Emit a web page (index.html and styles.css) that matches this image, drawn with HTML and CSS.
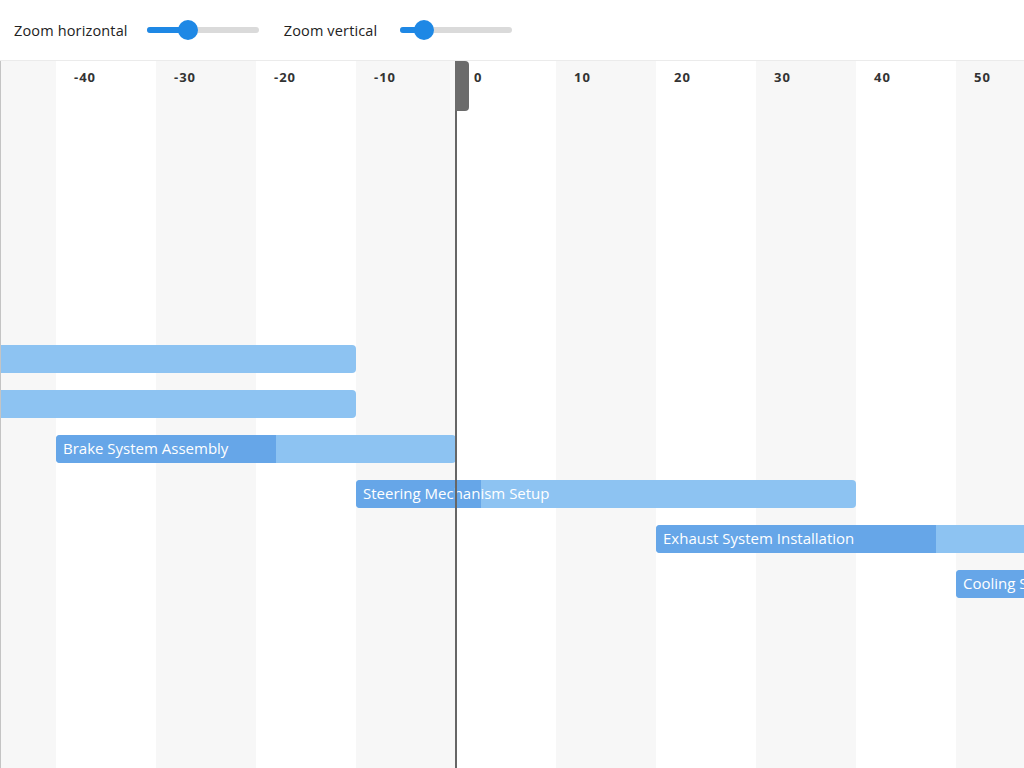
FILE: index.html
```html
<!DOCTYPE html>
<html>
<head>
<meta charset="utf-8">
<link rel="stylesheet" href="styles.css">
</head>
<body>
<div class="app">
  <header class="toolbar">
    <span class="label">Zoom horizontal</span>
    <div class="slider s1"><div class="fill" style="width:41px"></div><div class="thumb"></div></div>
    <span class="label">Zoom vertical</span>
    <div class="slider s2"><div class="fill" style="width:24px"></div><div class="thumb"></div></div>
  </header>
  <main class="canvas">
    <div class="stripes">
      <div class="col alt partial"></div>
      <div class="col"><span class="tick">-40</span></div>
      <div class="col alt"><span class="tick">-30</span></div>
      <div class="col"><span class="tick">-20</span></div>
      <div class="col alt"><span class="tick">-10</span></div>
      <div class="col"><span class="tick">0</span></div>
      <div class="col alt"><span class="tick">10</span></div>
      <div class="col"><span class="tick">20</span></div>
      <div class="col alt"><span class="tick">30</span></div>
      <div class="col"><span class="tick">40</span></div>
      <div class="col alt"><span class="tick">50</span></div>
    </div>
    <div class="rows">
      <div class="row"></div>
      <div class="row"></div>
      <div class="row"></div>
      <div class="row"></div>
      <div class="row"></div>
      <div class="row"></div>
      <div class="row"><div class="bar" style="margin-left:-145px;width:500px"><div class="progress" style="width:20%"></div></div></div>
      <div class="row"><div class="bar" style="margin-left:-145px;width:500px"><div class="progress" style="width:15%"></div></div></div>
      <div class="row"><div class="bar" style="margin-left:55px;width:400px"><div class="progress" style="width:55%"></div><span class="name">Brake System Assembly</span></div></div>
      <div class="row"><div class="bar" style="margin-left:355px;width:500px"><div class="progress" style="width:25%"></div><span class="name">Steering Mechanism Setup</span></div></div>
      <div class="row"><div class="bar" style="margin-left:655px;width:500px"><div class="progress" style="width:56%"></div><span class="name">Exhaust System Installation</span></div></div>
      <div class="row"><div class="bar" style="margin-left:955px;width:400px"><div class="progress" style="width:60%"></div><span class="name">Cooling System Integration</span></div></div>
    </div>
    <div class="today"><div class="handle"></div></div>
  </main>
</div>
</body>
</html>
```
FILE: styles.css
```css
* { box-sizing: border-box; }
html, body { margin: 0; padding: 0; }
body {
  font-family: "Open Sans", "Noto Sans", sans-serif;
  color: #222;
  background: #fff;
}
.app {
  height: 100vh;
  display: flex;
  flex-direction: column;
  overflow: hidden;
}
.toolbar {
  flex: 0 0 61px;
  display: flex;
  align-items: center;
  padding-left: 14px;
  border-bottom: 1px solid #ebebeb;
}
.label {
  font-size: 14.5px;
  letter-spacing: 0.15px;
  color: #222;
}
.slider {
  position: relative;
  width: 112px;
  height: 6px;
  border-radius: 3px;
  background: #dadada;
  margin-left: 19px;
  margin-right: 25px;
}
.s2 { margin-left: 23px; }
.slider .fill {
  height: 6px;
  border-radius: 3px;
  background: #1e88e5;
}
.slider .thumb {
  position: absolute;
  top: -7px;
  width: 20px;
  height: 20px;
  border-radius: 50%;
  background: #1e88e5;
}
.s1 .thumb { left: 31px; }
.s2 .thumb { left: 14px; }

.canvas {
  flex: 1;
  position: relative;
  display: grid;
  overflow: hidden;
  border-left: 1px solid #c4c4c4;
}
.stripes, .rows { grid-area: 1 / 1; }
.stripes {
  display: flex;
  min-width: 0;
}
.col {
  flex: 0 0 100px;
  background: #fff;
  padding: 4px 0 0 18px;
}
.col.alt { background: #f7f7f7; }
.col.partial { flex-basis: 55px; }
.tick {
  font-size: 13px;
  font-weight: 700;
  line-height: 16px;
  letter-spacing: 1px;
  color: #333;
}
.rows {
  display: flex;
  flex-direction: column;
  min-width: 0;
}
.row {
  flex: 0 0 45px;
  padding-top: 14px;
  display: flex;
}
.bar {
  flex: 0 0 auto;
  height: 28px;
  border-radius: 4px;
  background: #8dc3f2;
  display: grid;
  overflow: hidden;
}
.bar .progress, .bar .name { grid-area: 1 / 1; }
.bar .progress {
  background: #66a6e8;
  height: 28px;
}
.bar .name {
  color: #fff;
  font-size: 15px;
  line-height: 26px;
  padding-left: 7px;
  white-space: nowrap;
}
.today {
  position: absolute;
  left: 454px;
  top: 0;
  bottom: 0;
  width: 2px;
  background: #666;
}
.handle {
  width: 14px;
  height: 50px;
  background: #6b6b6b;
  border-radius: 0 4px 4px 0;
}
```
